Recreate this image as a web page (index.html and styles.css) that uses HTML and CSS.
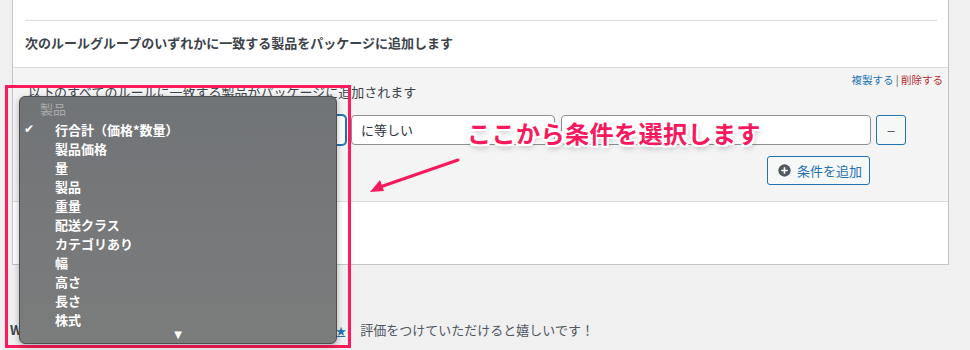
FILE: index.html
```html
<!DOCTYPE html>
<html lang="ja">
<head>
    <meta charset="UTF-8">
    <title>パッケージ条件</title>
    <link rel="stylesheet" href="styles.css">
</head>
<body>
<div class="page">
    <div class="panel">
        <div class="panel_top">
            <hr class="sep">
            <h3 class="group_title">次のルールグループのいずれかに一致する製品をパッケージに追加します</h3>
        </div>

        <div class="rule_group">
            <div class="group_actions">
                <a href="#" class="dup">複製する</a> | <a href="#" class="del">削除する</a>
            </div>
            <p class="group_desc">以下のすべてのルールに一致する製品がパッケージに追加されます</p>

            <div class="rule_row">
                <div class="field field_first">行合計（価格*数量）</div>
                <div class="field field_op">に等しい</div>
                <div class="field field_value"></div>
                <button class="btn_minus">–</button>
            </div>
            <div class="add_row">
                <button class="btn_add">
                    <svg width="13" height="13" viewBox="0 0 20 20">
                        <circle cx="10" cy="10" r="9.5" fill="#50575e"/>
                        <path d="M10 5v10M5 10h10" stroke="#fff" stroke-width="2.6"/>
                    </svg>
                    条件を追加
                </button>
            </div>
        </div>

        <div class="panel_bottom"></div>
    </div>

    <p class="footer">
        <b>WooCommerce Advanced Shipping Packages</b>
        <a href="#" class="stars">★★★★★</a>評価をつけていただけると嬉しいです！
    </p>
</div>

<!-- 注釈：開いたセレクトメニュー -->
<div class="highlight"></div>
<ul class="menu">
    <li class="menu_label">製品</li>
    <li class="menu_item checked">行合計（価格*数量）</li>
    <li class="menu_item">製品価格</li>
    <li class="menu_item">量</li>
    <li class="menu_item">製品</li>
    <li class="menu_item">重量</li>
    <li class="menu_item">配送クラス</li>
    <li class="menu_item">カテゴリあり</li>
    <li class="menu_item">幅</li>
    <li class="menu_item">高さ</li>
    <li class="menu_item">長さ</li>
    <li class="menu_item">株式</li>
    <li class="menu_more">▼</li>
</ul>

<div class="note">ここから条件を選択します</div>
<svg class="arrow" width="100" height="40" viewBox="0 0 100 40">
    <path d="M90 4 L12 31" stroke="#f7195d" stroke-width="3" stroke-linecap="round"/>
    <path d="M2 36 L12 24 L16 35 Z" fill="#f7195d"/>
</svg>
</body>
</html>
```

FILE: styles.css
```css
body{
    margin: 0;
    width: 970px;
    height: 350px;
    overflow: hidden;
    background: #f0f0f1;
    font-family: "Noto Sans CJK JP", "Liberation Sans", sans-serif;
    font-size: 13px;
    color: #3c434a;
}

.panel{
    margin-left: 12px;
    width: 935px;
    border: 1px solid #c3c4c7;
    border-top: none;
    background: white;
}

/*上の白い部分*/
.panel_top{
    height: 67px;
    padding: 20px 11px 0 12px;
    box-sizing: border-box;
}
.sep{
    margin: 0;
    border: none;
    border-top: 1px solid #dcdcde;
}
.group_title{
    margin: 13px 0 0;
    font-size: 13px;
    line-height: 18px;
    font-weight: bold;
}

/*ルールグループ（灰色）*/
.rule_group{
    background: #f4f4f4;
    border-top: 1px solid #dcdcde;
    border-bottom: 1px solid #dcdcde;
    padding: 0 0 16px 15px;
}
.group_actions{
    float: right;
    margin: 5px 5px 0 0;
    font-size: 10.5px;
    line-height: 14px;
    color: #50575e;
}
.group_actions a{
    text-decoration: none;
}
.dup{
    color: #2271b1;
}
.del{
    color: #b32d2e;
}
.group_desc{
    margin: 0;
    padding-top: 15px;
    line-height: 18px;
}

.rule_row{
    display: flex;
    margin-top: 14px;
    height: 30px;
}
.field{
    height: 30px;
    box-sizing: border-box;
    border: 1px solid #8c8f94;
    border-radius: 4px;
    background: white;
    padding-left: 9px;
    line-height: 28px;
    font-size: 13px;
    color: #2c3338;
}
.field_first{
    width: 318px;
    border-color: #2271b1;
    box-shadow: 0 0 0 1px #2271b1;
}
.field_op{
    width: 204px;
    margin-left: 5px;
}
.field_value{
    width: 310px;
    margin-left: 6px;
}
.btn_minus{
    width: 30px;
    height: 30px;
    margin-left: 5px;
    border: 1px solid #2271b1;
    border-radius: 3px;
    background: #f6f7f7;
    color: #50575e;
    font-size: 13px;
    padding: 0;
}

.add_row{
    display: flex;
    justify-content: flex-end;
    margin-top: 11px;
    padding-right: 78px;
}
.btn_add{
    display: flex;
    align-items: center;
    gap: 6px;
    width: 103px;
    height: 29px;
    padding: 0 0 0 10px;
    border: 1px solid #2271b1;
    border-radius: 3px;
    background: #f6f7f7;
    color: #2271b1;
    font-family: inherit;
    font-size: 13px;
}

.panel_bottom{
    height: 62px;
}

.footer{
    margin: 56px 0 0 10px;
    line-height: 18px;
    color: #50575e;
    white-space: nowrap;
}
.footer b{
    color: #3c434a;
}
.stars{
    color: #2271b1;
    font-size: 10.5px;
    letter-spacing: -1px;
    margin-right: 15px;
}

/*赤い枠*/
.highlight{
    position: absolute;
    left: 5px;
    top: 85px;
    width: 340px;
    height: 257px;
    border: 3px solid #ff1a5c;
}

/*セレクトのメニュー*/
.menu{
    position: absolute;
    left: 19px;
    top: 96px;
    width: 318px;
    height: 248px;
    box-sizing: border-box;
    margin: 0;
    padding: 2px 0 0;
    list-style: none;
    border: 1px solid #4d4f51;
    border-radius: 6px;
    background: linear-gradient(#717477, #7b7c7c);
    box-shadow: 0 2px 6px rgba(0, 0, 0, 0.3);
    color: white;
    font-weight: bold;
}
.menu li{
    height: 19px;
    line-height: 19px;
}
.menu_label{
    padding-left: 20px;
    margin-bottom: 2px;
    color: #a8aaab;
    font-weight: normal;
}
.menu_item{
    padding-left: 35px;
    position: relative;
}
.checked::before{
    content: "✔";
    position: absolute;
    left: 4px;
    font-family: "DejaVu Sans", sans-serif;
    font-size: 12px;
}
.menu_more{
    text-align: center;
    font-size: 10px;
    font-family: "DejaVu Sans", sans-serif;
    margin-top: -4px;
}

/*説明の文字*/
.note{
    position: absolute;
    left: 467px;
    top: 117px;
    font-size: 24.2px;
    line-height: 32px;
    font-weight: bold;
    color: #f7195d;
    letter-spacing: 0.3px;
    text-shadow:
        2px 0 0 #fff, -2px 0 0 #fff, 0 2px 0 #fff, 0 -2px 0 #fff,
        2px 2px 0 #fff, -2px -2px 0 #fff, 2px -2px 0 #fff, -2px 2px 0 #fff,
        1px 3px 6px rgba(0, 0, 0, 0.35);
}
.arrow{
    position: absolute;
    left: 368px;
    top: 156px;
}
```
